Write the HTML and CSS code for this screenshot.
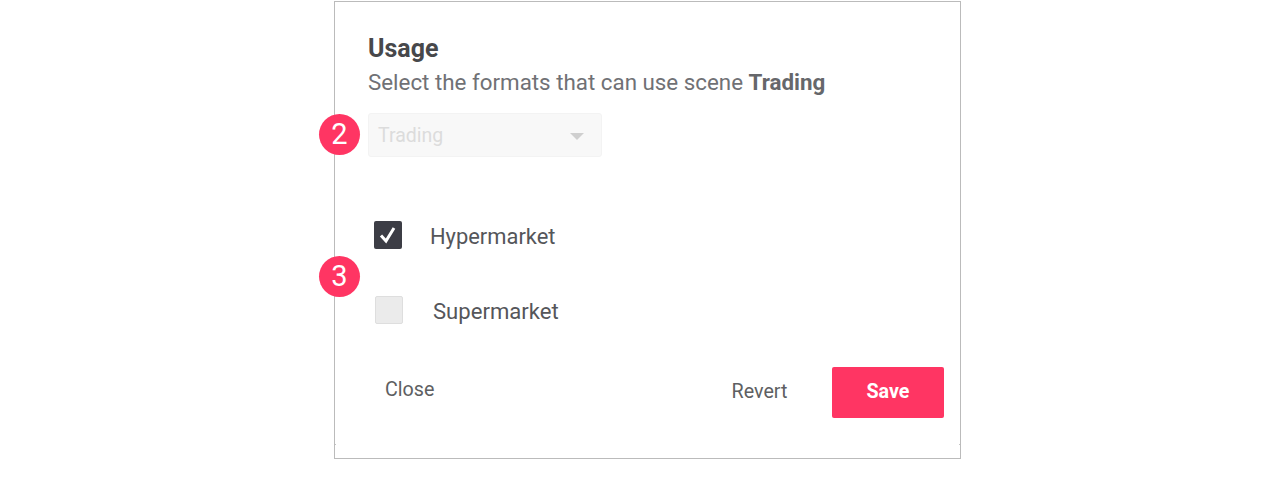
FILE: index.html
```html
<!DOCTYPE html>
<html lang="en">
<head>
<meta charset="utf-8">
<title>Usage</title>
<link rel="stylesheet" href="styles.css">
</head>
<body>
<main class="page">
  <section class="card">
    <h1 class="title">Usage</h1>
    <p class="subtitle">Select the formats that can use scene <b>Trading</b></p>
    <div class="select">
      <span>Trading</span>
      <svg class="caret" width="14" height="7" viewBox="0 0 14 7"><path d="M0 0h14L7 7z"/></svg>
    </div>
    <span class="badge badge-two">2</span>
    <span class="badge badge-three">3</span>
    <div class="option option-first">
      <span class="box box-on">
        <svg width="20" height="20" viewBox="0 0 20 20"><path d="M3 10.500 8 16 16 3" fill="none" stroke="#fff" stroke-width="3"/></svg>
      </span>
      <span class="label">Hypermarket</span>
    </div>
    <div class="option option-second">
      <span class="box box-off"></span>
      <span class="label">Supermarket</span>
    </div>
    <footer class="actions">
      <button class="btn btn-close">Close</button>
      <div class="right">
        <button class="btn btn-revert">Revert</button>
        <button class="btn btn-save">Save</button>
      </div>
    </footer>
  </section>
</main>
</body>
</html>
```
FILE: styles.css
```css
* { box-sizing: border-box; }
html, body { margin: 0; background: #fff; }
body { font-family: Roboto, "Liberation Sans", sans-serif; }
.page { height: 480px; padding: 1px 0 0 334px; }
.card {
  position: relative;
  width: 627px;
  height: 458px;
  border: 1px solid #bbbbbb;
  padding: 31px 16px 0 33px;
}
.card::before,
.card::after {
  content: "";
  position: absolute;
  top: 442px;
  width: 1px;
  height: 1px;
  background: #c4c4c4;
}
.card::before { left: 0; }
.card::after { right: 0; }
.title { margin: 0; font-size: 25px; line-height: 32px; font-weight: 700; color: #47484b; }
.subtitle { margin: 2px 0 0; font-size: 22.350px; line-height: 30px; color: #707175; }
.subtitle b { font-weight: 700; color: #66676b; }
.select {
  display: flex;
  align-items: center;
  justify-content: space-between;
  width: 234px;
  height: 44px;
  margin-top: 16px;
  padding: 0 17px 0 9px;
  background: #f8f8f8;
  border: 1px solid #f3f3f3;
  border-radius: 3px;
  font-size: 19.500px;
  color: #dcdcdc;
}
.caret { fill: #cfcfcf; margin-top: 3px; }
.badge {
  position: absolute;
  left: -16px;
  width: 41px;
  height: 41px;
  border-radius: 50%;
  background: #ff3563;
  color: #fff;
  font-size: 29px;
  line-height: 41px;
  text-align: center;
}
.badge-two { top: 112px; }
.badge-three { top: 254px; }
.option { display: flex; align-items: center; font-size: 22px; color: #55565a; }
.option-first { margin: 63px 0 0 6px; height: 30px; }
.option-second { margin: 45px 0 0 7px; height: 30px; }
.label { position: relative; top: 1px; }
.box { display: flex; align-items: center; justify-content: center; width: 28px; height: 28px; border-radius: 2px; }
.box-on { background: #3c3d45; }
.box-off { background: #ebebeb; border: 1px solid #dedede; }
.option-first .label { margin-left: 28px; font-size: 21.900px; }
.option-second .label { margin-left: 30px; font-size: 22.100px; }
.actions { display: flex; justify-content: space-between; align-items: center; margin-top: 42px; }
.right { display: flex; align-items: center; gap: 36px; }
.btn { border: 0; background: none; font-family: inherit; font-size: 19.700px; color: #5e5f62; padding: 0; cursor: pointer; }
.btn-close { margin: -6px 0 0 17px; }
.btn-revert { width: 71px; margin: -2px 1px 0 0; }
.btn-save { width: 112px; height: 51px; padding-bottom: 2px; background: #ff3563; color: #fff; font-weight: 700; border-radius: 2px; }
```
